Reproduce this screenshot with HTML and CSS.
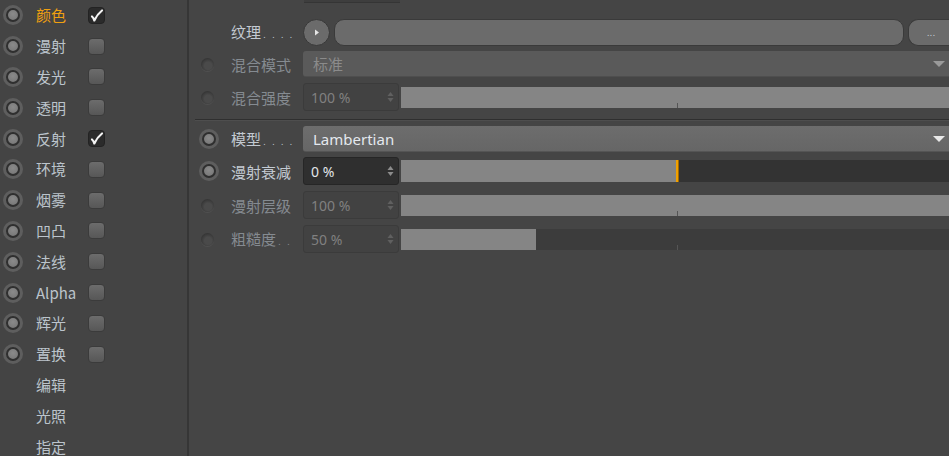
FILE: index.html
```html
<!DOCTYPE html>
<html lang="zh">
<head>
<meta charset="utf-8">
<title>材质</title>
<link rel="stylesheet" href="styles.css">
</head>
<body>
<div class="app">
  <aside class="sidebar">
    <div class="chan"><span class="radio"></span><span class="name active">颜色</span><span class="check on"><svg width="15" height="15" viewBox="0 0 15 15"><path d="M3 8.5 Q4.8 10 5.3 12.5 Q8 6.5 13 2.5" fill="none" stroke="#f4f4f4" stroke-width="2.2" stroke-linecap="round" stroke-linejoin="round"/></svg></span></div>
    <div class="chan"><span class="radio"></span><span class="name">漫射</span><span class="check"></span></div>
    <div class="chan"><span class="radio"></span><span class="name">发光</span><span class="check"></span></div>
    <div class="chan"><span class="radio"></span><span class="name">透明</span><span class="check"></span></div>
    <div class="chan"><span class="radio"></span><span class="name">反射</span><span class="check on"><svg width="15" height="15" viewBox="0 0 15 15"><path d="M3 8.5 Q4.8 10 5.3 12.5 Q8 6.5 13 2.5" fill="none" stroke="#f4f4f4" stroke-width="2.2" stroke-linecap="round" stroke-linejoin="round"/></svg></span></div>
    <div class="chan"><span class="radio"></span><span class="name">环境</span><span class="check"></span></div>
    <div class="chan"><span class="radio"></span><span class="name">烟雾</span><span class="check"></span></div>
    <div class="chan"><span class="radio"></span><span class="name">凹凸</span><span class="check"></span></div>
    <div class="chan"><span class="radio"></span><span class="name">法线</span><span class="check"></span></div>
    <div class="chan"><span class="radio"></span><span class="name">Alpha</span><span class="check"></span></div>
    <div class="chan"><span class="radio"></span><span class="name">辉光</span><span class="check"></span></div>
    <div class="chan"><span class="radio"></span><span class="name">置换</span><span class="check"></span></div>
    <div class="chan"><span class="noradio"></span><span class="name">编辑</span></div>
    <div class="chan"><span class="noradio"></span><span class="name">光照</span></div>
    <div class="chan"><span class="noradio"></span><span class="name">指定</span></div>
  </aside>
  <main class="panel">
    <div class="topstrip"><span class="topbox"></span></div>

    <div class="row r-tex">
      <span class="rad-slot"></span>
      <span class="label">纹理<span class="dots">....</span></span>
      <span class="playbtn"><svg width="8" height="9" viewBox="0 0 8 9"><path d="M2 1.5 L6 4.5 L2 7.5 Z" fill="#e6e6e6"/></svg></span>
      <span class="texpill"></span>
      <span class="morebtn">...</span>
    </div>

    <div class="row r-mode dim">
      <span class="rad-slot"><span class="dot"></span></span>
      <span class="label">混合模式</span>
      <span class="select off"><span>标准</span><span class="tri"></span></span>
    </div>

    <div class="row r-str dim">
      <span class="rad-slot"><span class="dot"></span></span>
      <span class="label">混合强度</span>
      <span class="num off"><span>100 %</span><svg class="spin" width="7" height="12" viewBox="0 0 7 12"><path d="M3.5 1 L6.5 5 L0.5 5 Z M3.5 11 L6.5 7 L0.5 7 Z"/></svg></span>
      <span class="slider"><span class="fill" style="width:100%"></span><span class="tick"></span></span>
    </div>

    <div class="sep"></div>

    <div class="row r-model">
      <span class="rad-slot"><span class="radio"></span></span>
      <span class="label">模型<span class="dots">....</span></span>
      <span class="select on"><span>Lambertian</span><span class="tri"></span></span>
    </div>

    <div class="row r-fall">
      <span class="rad-slot"><span class="radio"></span></span>
      <span class="label">漫射衰减</span>
      <span class="num on"><span>0 %</span><svg class="spin" width="7" height="12" viewBox="0 0 7 12"><path d="M3.5 1 L6.5 5 L0.5 5 Z M3.5 11 L6.5 7 L0.5 7 Z"/></svg></span>
      <span class="slider dark"><span class="fill" style="width:50.3%"></span><span class="marker"></span></span>
    </div>

    <div class="row r-level dim">
      <span class="rad-slot"><span class="dot"></span></span>
      <span class="label">漫射层级</span>
      <span class="num off"><span>100 %</span><svg class="spin" width="7" height="12" viewBox="0 0 7 12"><path d="M3.5 1 L6.5 5 L0.5 5 Z M3.5 11 L6.5 7 L0.5 7 Z"/></svg></span>
      <span class="slider"><span class="fill" style="width:100%"></span><span class="tick"></span></span>
    </div>

    <div class="row r-rough dim">
      <span class="rad-slot"><span class="dot"></span></span>
      <span class="label">粗糙度<span class="dots">..</span></span>
      <span class="num off"><span>50 %</span><svg class="spin" width="7" height="12" viewBox="0 0 7 12"><path d="M3.5 1 L6.5 5 L0.5 5 Z M3.5 11 L6.5 7 L0.5 7 Z"/></svg></span>
      <span class="slider mid"><span class="fill" style="width:24.7%"></span><span class="tick"></span></span>
    </div>
  </main>
</div>
</body>
</html>
```

FILE: styles.css
```css
* { box-sizing: border-box; }
html, body {
  margin: 0;
  padding: 0;
  background: #454545;
  width: 949px;
  height: 456px;
  overflow: hidden;
  font-family: "Noto Sans CJK SC", "Noto Sans", sans-serif;
}
.app {
  display: flex;
  width: 949px;
  height: 456px;
}

/* ---------- sidebar ---------- */
.sidebar {
  width: 189px;
  flex: none;
  border-right: 2px solid #363636;
  background: #444444;
  padding-top: 0;
}
.chan {
  height: 30.8px;
  display: flex;
  align-items: center;
}
.radio {
  width: 20px;
  height: 20px;
  border-radius: 50%;
  background: #5e5e5e;
  display: flex;
  align-items: center;
  justify-content: center;
  flex: none;
}
.radio::after {
  content: "";
  width: 14px;
  height: 14px;
  border-radius: 50%;
  border: 2px solid #2f2f2f;
  background: radial-gradient(circle at 50% 40%, #8a8a8a, #747474);
  box-sizing: border-box;
}
.sidebar .radio { margin-left: 3px; }
.noradio { width: 20px; height: 20px; margin-left: 3px; flex: none; }
.name {
  margin-left: 13px;
  width: 52px;
  font-size: 15px;
  color: #bcc4cc;
  line-height: 1;
  margin-top: -1px;
}
.name.active { color: #f0a010; }
.check {
  width: 17px;
  height: 17px;
  border-radius: 4px;
  background: linear-gradient(#6c6c6c, #575757);
  border: 1px solid #3b3b3b;
  display: flex;
  align-items: center;
  justify-content: center;
}
.check.on {
  background: #2b2b2b;
  border-color: #232323;
}
.check svg { display: block; }

/* ---------- main panel ---------- */
.panel {
  flex: 1;
  display: flex;
  flex-direction: column;
  background: #454545;
}
.topstrip {
  height: 3px;
  display: flex;
}
.topbox {
  margin-left: 115px;
  width: 96px;
  height: 3px;
  background: #3e3e3e;
  border-bottom: 1px solid #353535;
}
.row {
  height: 28px;
  display: flex;
  align-items: center;
}
.r-tex { margin-top: 15px; }
.r-mode { margin-top: 4px; }
.r-str { margin-top: 5px; }
.sep {
  margin: 8px 0 0 6px;
  height: 1px;
  background: #2f2f2f;
  box-shadow: 0 1px 0 #4e4e4e;
  flex: none;
}
.r-model { margin-top: 5px; }
.r-fall { margin-top: 4px; }
.r-level { margin-top: 6px; }
.r-rough { margin-top: 6px; }

.rad-slot {
  width: 42px;
  height: 28px;
  display: flex;
  align-items: center;
  padding-left: 10px;
  flex: none;
}
.dot {
  width: 13px;
  height: 13px;
  border-radius: 50%;
  margin-left: 2px;
  background: radial-gradient(circle at 55% 60%, #4a4a4a 35%, #363636 70%);
  box-shadow: 0 1px 0 #505050;
}
.label {
  width: 72px;
  flex: none;
  font-size: 15px;
  color: #c3cad2;
  white-space: nowrap;
  line-height: 1;
}
.dots {
  font-family: "DejaVu Sans", sans-serif;
  font-size: 9px;
  letter-spacing: 6px;
  margin-left: 2px;
  color: #bcc4cc;
}
.dim .label { color: #858b91; }
.dim .dots { color: #858b91; }

.playbtn {
  width: 27px;
  height: 27px;
  border-radius: 50%;
  background: #6b6b6b;
  border: 1px solid #383838;
  display: flex;
  align-items: center;
  justify-content: center;
  flex: none;
}
.texpill {
  margin-left: 4px;
  width: 570px;
  height: 27px;
  border-radius: 10px;
  background: #6b6b6b;
  border: 1px solid #3a3a3a;
  flex: none;
}
.morebtn {
  margin-left: 4px;
  flex: 1;
  height: 27px;
  border-radius: 10px 0 0 10px;
  background: #6b6b6b;
  border: 1px solid #3a3a3a;
  border-right: none;
  color: #c4ccd8;
  font-family: "DejaVu Sans", sans-serif;
  font-size: 9px;
  display: flex;
  align-items: center;
  justify-content: center;
  padding-top: 2px;
  padding-left: 4px;
}

.select {
  flex: 1;
  height: 26px;
  display: flex;
  align-items: center;
  justify-content: space-between;
  padding: 0 2px 0 10px;
  font-size: 15px;
  border-radius: 3px 0 0 3px;
}
.select.off {
  background: #5a5a5a;
  color: #8b8b8b;
  border-bottom: 1px solid #4e4e4e;
}
.select.on {
  background: linear-gradient(#6d6d6d, #666666);
  color: #e4e8ee;
  border-bottom: 1px solid #555;
  font-family: "Noto Sans", sans-serif;
}
.tri {
  width: 0;
  height: 0;
  border-left: 6px solid transparent;
  border-right: 6px solid transparent;
  border-top: 6px solid #9a9a9a;
  margin-right: 2px;
}
.select.on .tri { border-top-color: #e8e8e8; }

.num {
  width: 96px;
  height: 28px;
  flex: none;
  display: flex;
  align-items: center;
  justify-content: space-between;
  padding: 0 4px 0 7px;
  font-family: "Noto Sans", sans-serif;
  font-size: 14px;
  border-radius: 3px;
}
.num.off {
  background: #424242;
  border: 1px solid #3b3b3b;
  color: #808080;
}
.num.on {
  background: #2f2f2f;
  border: 1px solid #262626;
  color: #e2e6ea;
}
.spin { display: block; fill: #8c8c8c; }
.num.off .spin { fill: #606060; }

.slider {
  margin-left: 2px;
  flex: 1;
  height: 21px;
  position: relative;
  background: #858585;
}
.slider.dark { background: #333333; height: 22px; }
.slider.mid { background: #3c3c3c; }
.fill {
  display: block;
  height: 100%;
  background: #858585;
}
.tick {
  position: absolute;
  left: 276px;
  bottom: 0;
  width: 1px;
  height: 5px;
  background: #555;
}
.marker {
  position: absolute;
  left: 275px;
  top: 0;
  width: 3px;
  height: 100%;
  background: #f0a000;
  border-right: 1px solid #a06800;
}
```
